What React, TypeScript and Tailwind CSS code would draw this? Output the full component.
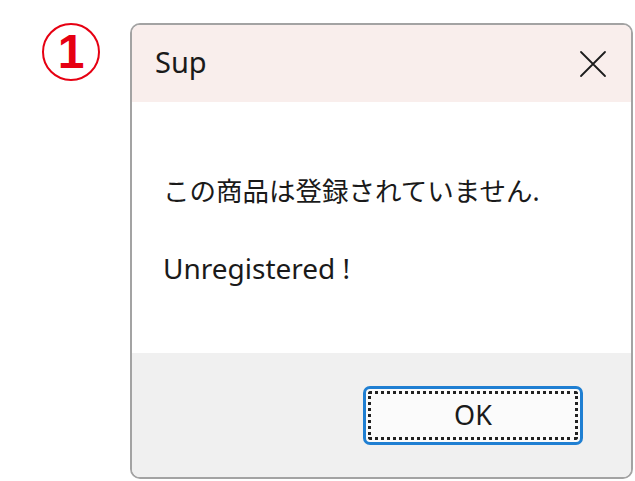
import React from "react";

const font = { fontFamily: '"Noto Sans", "Noto Sans CJK JP", sans-serif' };

const CloseIcon = () => (
  <svg width="28" height="28" viewBox="0 0 28 28" fill="none">
    <path d="M2 2 L26 26 M26 2 L2 26" stroke="#1c1c1c" strokeWidth="1.8" strokeLinecap="round" />
  </svg>
);

export default function App() {
  return (
    <div className="w-[635px] h-[481px] bg-white flex items-start overflow-hidden" style={font}>
      {/* circled number */}
      <div className="ml-[42px] mt-[23px] w-[58px] h-[58px] rounded-full border-[2.5px] border-[#e60012] flex items-center justify-center shrink-0">
        <span className="text-[48px] leading-none font-bold text-[#e60012]" style={{ fontFamily: '"Liberation Sans", sans-serif' }}>
          1
        </span>
      </div>

      {/* message box */}
      <div className="ml-[30px] mt-[23px] w-[503px] h-[456px] shrink-0 flex flex-col rounded-[10px] border-2 border-[#a3a3a3] overflow-hidden">
        <div className="h-[77px] bg-[#f9eeec] flex items-center justify-between pl-[23px] pr-[24px] shrink-0">
          <span className="text-[29px] text-[#1a1a1a] leading-none -mt-[4px]">Sup</span>
          <CloseIcon />
        </div>
        <div className="h-[251px] bg-white pl-[31px] pt-[73px] flex flex-col gap-[45px] leading-[32px] text-[#1a1a1a] shrink-0">
          <div className="text-[26.5px]">この商品は登録されていません.</div>
          <div className="text-[28px]">Unregistered !</div>
        </div>
        <div className="flex-1 bg-[#f0f0f0] flex justify-end items-start pt-[33px] pr-[48px]">
          <button className="w-[220px] h-[59px] rounded-[7px] border-[3px] border-[#1f7fd2] bg-[#fbfbfb] p-[2px]">
            <div className="w-full h-full border-[3px] border-dotted border-[#222] rounded-[3px] flex items-center justify-center text-[27px] text-[#1a1a1a]">
              OK
            </div>
          </button>
        </div>
      </div>
    </div>
  );
}
